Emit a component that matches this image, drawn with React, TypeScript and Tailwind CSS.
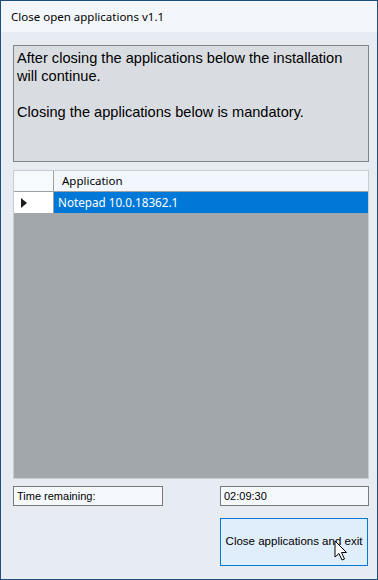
import React from "react";

export default function App() {
  return (
    <div className="w-[378px] h-[580px] border border-[#1d4f7c] flex flex-col bg-[#e6ecf1] overflow-hidden">
      <div className="h-[31px] bg-[#f3f7fb] flex items-center pl-[10px] text-[11.5px] text-black" style={{ fontFamily: '"Noto Sans", "Open Sans", sans-serif' }}>
        Close open applications v1.1
      </div>
      <div className="flex-1 flex flex-col pl-[12px] pt-[13px]" style={{ fontFamily: '"Liberation Sans", Arial, sans-serif' }}>
        <div className="w-[356px] h-[117px] border border-[#7f8489] bg-[#d9dde2] px-[3px] pt-[3px] text-[14.6px] leading-[18px] text-black">
          <p>After closing the applications below the installation will continue.</p>
          <p className="mt-[18px]">Closing the applications below is mandatory.</p>
        </div>
        <div className="mt-[8px] w-[356px] h-[309px] bg-[#a2a7ac] border border-[#c8ccd0] flex flex-col">
          <div className="flex h-[21px] bg-white border-b border-[#a0a0a0]">
            <div className="w-[40px] bg-[#f7fafd] border-r border-[#a0a0a0]" />
            <div className="flex-1 bg-[#f2f7fd] pl-[8px] flex items-center text-[11.5px] text-black" style={{ fontFamily: '"Noto Sans", "Open Sans", sans-serif' }}>
              Application
            </div>
          </div>
          <div className="flex h-[21px]">
            <div className="w-[40px] bg-white border-r border-[#a0a0a0] flex items-center pl-[7px]">
              <svg width="6" height="10" viewBox="0 0 6 10"><path d="M0 0 L6 5 L0 10 Z" fill="#1f1f1f" /></svg>
            </div>
            <div className="flex-1 bg-[#0078d7] pl-[4px] flex items-center text-[11.7px] text-white" style={{ fontFamily: '"Noto Sans", "Open Sans", sans-serif' }}>
              Notepad 10.0.18362.1
            </div>
          </div>
        </div>
        <div className="mt-[7px] flex w-[356px] justify-between text-[11px] text-black">
          <div className="w-[150px] h-[20px] border border-[#7a7a7a] bg-[#f5f9fd] pl-[3px] flex items-center">Time remaining:</div>
          <div className="w-[149px] h-[20px] border border-[#7a7a7a] bg-[#f5f9fd] pl-[3px] flex items-center">02:09:30</div>
        </div>
        <div className="mt-[12px] ml-[207px] relative w-[148px] h-[48px] border border-[#0078d7] bg-[#e0eefb] flex items-center justify-center text-[11.5px] text-black whitespace-nowrap">
          Close applications and exit
          <svg className="absolute left-[113px] top-[21px]" width="14" height="22" viewBox="0 0 14 22">
            <path d="M1 1 L1 17 L5 13.5 L8 20 L10.5 19 L7.5 12.5 L12.5 12.5 Z" fill="white" stroke="black" strokeWidth="1" strokeLinejoin="round" />
          </svg>
        </div>
      </div>
    </div>
  );
}
